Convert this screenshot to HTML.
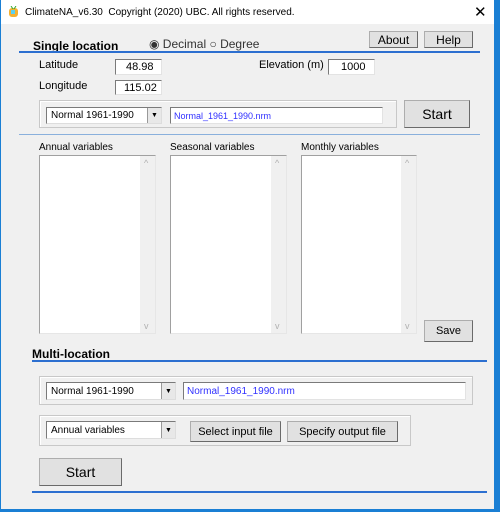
<!DOCTYPE html><html><head><style>
*{margin:0;padding:0;box-sizing:border-box}
body{width:500px;height:512px;background:#1a7fd4;position:relative;overflow:hidden;font-family:"Liberation Sans",sans-serif;font-size:11px;color:#000}
.a{position:absolute}
.win{left:1px;top:0;width:493px;height:509px;background:#f0f0f0}
.tb{left:1px;top:0;width:493px;height:24px;background:#fff}
.btn{position:absolute;background:#e1e1e1;border:1px solid #adadad;border-right-color:#6a6a6a;border-bottom-color:#6a6a6a;display:flex;align-items:center;justify-content:center;font-size:12px}
.inp{position:absolute;background:#fff;border:1px solid #7a7a7a;border-right-color:#e3e3e3;border-bottom-color:#e3e3e3;font-size:11px;padding-left:3px;display:flex;align-items:center}
.grp{position:absolute;border:1px solid #c8c8c8;box-shadow:inset 1px 1px 0 #fff}
.sel{position:absolute;background:#fff;border:1px solid #7a7a7a;border-right-color:#ddd;border-bottom-color:#ddd;font-size:10px;padding-left:4px;display:flex;align-items:center}
.sel i{position:absolute;right:0;top:0;bottom:0;width:14px;background:#e8e8e8;border-left:1px solid #999;font-style:normal;font-size:7px;display:flex;align-items:center;justify-content:center}
.lst{position:absolute;background:#fff;border:1px solid #a0a0a0;border-right-color:#e6e6e6;border-bottom-color:#e6e6e6}
.lst b{position:absolute;right:0;top:0;bottom:0;width:15px;background:#f0f0f0;color:#b0b0b0;font-weight:normal;font-size:9px}
.lbl{position:absolute;font-size:10px}
.hl{position:absolute;height:2px;background:#2c6fd0}
</style></head><body>
<div class="a win"></div><div class="a tb"></div>
<svg class="a" style="left:8px;top:6px" width="11" height="12"><rect x="1" y="2" width="9" height="9" rx="3" fill="#f5b030"/><rect x="3" y="4" width="4" height="4" fill="#5ad0f0"/><path d="M3 0l2 3M8 0l-2 3" stroke="#3a3" /></svg>
<div class="a" style="left:25px;top:7px;font-size:10px">ClimateNA_v6.30&nbsp; Copyright (2020) UBC. All rights reserved.</div>
<div class="a" style="left:474px;top:3px;font-size:15px">✕</div>
<div class="a" style="left:33px;top:39px;font-size:12px;font-weight:bold">Single location</div>
<div class="hl" style="left:19px;top:51px;width:461px"></div>
<div class="a" style="left:149px;top:37px;font-size:12px;color:#333">◉ Decimal ○ Degree</div>
<div class="btn" style="left:369px;top:31px;width:49px;height:17px">About</div>
<div class="btn" style="left:424px;top:31px;width:49px;height:17px">Help</div>
<div class="lbl" style="left:39px;top:59px;font-size:11px">Latitude</div>
<div class="inp" style="left:115px;top:59px;width:47px;height:16px;padding-left:10px">48.98</div>
<div class="lbl" style="left:39px;top:80px;font-size:11px">Longitude</div>
<div class="inp" style="left:115px;top:80px;width:47px;height:15px;padding-left:8px">115.02</div>
<div class="lbl" style="left:259px;top:59px;font-size:11px">Elevation (m)</div>
<div class="inp" style="left:328px;top:59px;width:47px;height:16px;padding-left:12px">1000</div>
<div class="grp" style="left:39px;top:100px;width:358px;height:28px"></div>
<div class="sel" style="left:46px;top:107px;width:116px;height:17px">Normal 1961-1990<i>▼</i></div>
<div class="inp" style="left:170px;top:107px;width:213px;height:17px;color:#3030ff;font-size:9px">Normal_1961_1990.nrm</div>
<div class="btn" style="left:404px;top:100px;width:66px;height:28px;font-size:14px">Start</div>
<div class="hl" style="left:19px;top:134px;width:461px;height:1px;background:#8ab0dc"></div>
<div class="lbl" style="left:39px;top:142px">Annual variables</div>
<div class="lbl" style="left:170px;top:142px">Seasonal variables</div>
<div class="lbl" style="left:301px;top:142px">Monthly variables</div>
<div class="lst" style="left:39px;top:155px;width:117px;height:179px"><b><span style="position:absolute;top:2px;left:4px">^</span><span style="position:absolute;bottom:2px;left:4px">v</span></b></div>
<div class="lst" style="left:170px;top:155px;width:117px;height:179px"><b><span style="position:absolute;top:2px;left:4px">^</span><span style="position:absolute;bottom:2px;left:4px">v</span></b></div>
<div class="lst" style="left:301px;top:155px;width:116px;height:179px"><b><span style="position:absolute;top:2px;left:4px">^</span><span style="position:absolute;bottom:2px;left:4px">v</span></b></div>
<div class="btn" style="left:424px;top:320px;width:49px;height:22px;font-size:11px">Save</div>
<div class="a" style="left:32px;top:347px;font-size:12px;font-weight:bold">Multi-location</div>
<div class="hl" style="left:32px;top:360px;width:455px"></div>
<div class="grp" style="left:39px;top:376px;width:434px;height:29px"></div>
<div class="sel" style="left:46px;top:382px;width:130px;height:18px">Normal 1961-1990<i>▼</i></div>
<div class="inp" style="left:183px;top:382px;width:283px;height:18px;color:#3030ff;font-size:10px">Normal_1961_1990.nrm</div>
<div class="grp" style="left:39px;top:415px;width:372px;height:31px"></div>
<div class="sel" style="left:46px;top:421px;width:130px;height:18px">Annual variables<i>▼</i></div>
<div class="btn" style="left:190px;top:421px;width:91px;height:21px;font-size:11px">Select input file</div>
<div class="btn" style="left:287px;top:421px;width:111px;height:21px;font-size:11px">Specify output file</div>
<div class="btn" style="left:39px;top:458px;width:83px;height:28px;font-size:14px">Start</div>
<div class="hl" style="left:32px;top:491px;width:455px"></div>
</body></html>
